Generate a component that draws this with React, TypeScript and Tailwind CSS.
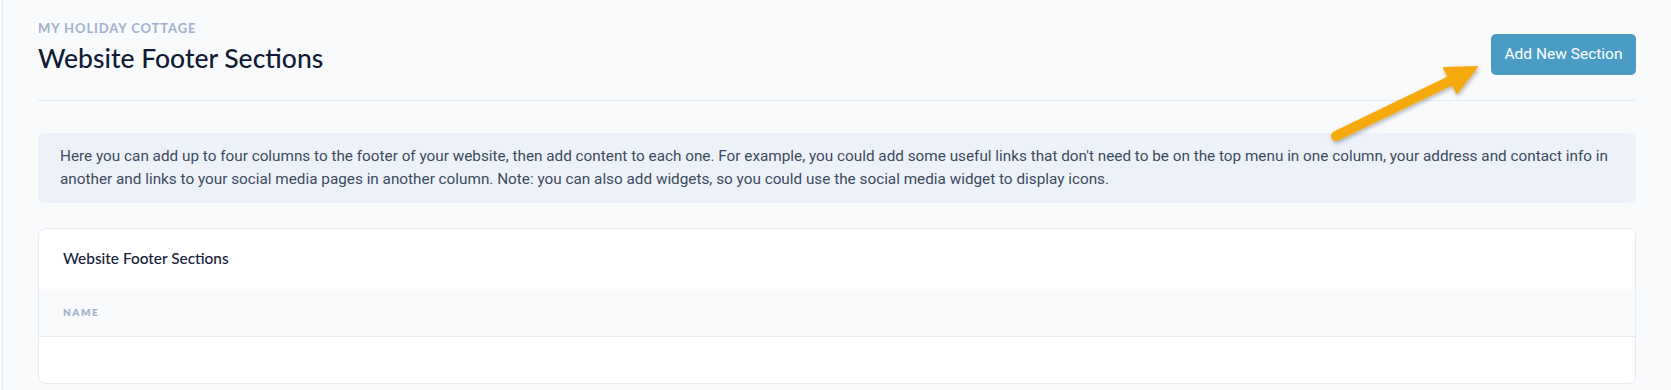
export default function App() {
  const line1 =
    "Here you can add up to four columns to the footer of your website, then add content to each one. For example, you could add some useful links that don't need to be on the top menu in one column, your address and contact info in";
  const line2 =
    "another and links to your social media pages in another column. Note: you can also add widgets, so you could use the social media widget to display icons.";

  return (
    <div className="relative min-h-screen bg-[#f8fafc]">
      <div className="ml-[2px] min-h-screen border-l border-[#e3e7ee] pl-[35px] pr-[35px] pb-[6px]">
        {/* page header */}
        <div className="flex items-start justify-between border-b border-[#e5e9f0] pt-[20px] pb-[25px]">
          <div className="flex flex-col">
            <span className="font-['Lato',sans-serif] text-[13px] leading-4 font-bold tracking-[0.07em] text-[#a1b1cc]">
              MY HOLIDAY COTTAGE
            </span>
            <h1 className="mt-[6px] font-['Lato',sans-serif] text-[26.5px] leading-8 font-medium text-[#111b35]">
              Website Footer Sections
            </h1>
          </div>
          <button className="mt-[14px] h-[41px] w-[145px] rounded-[5px] bg-[#4a9cc5] font-['Roboto',sans-serif] text-[15.5px] text-white">
            Add New Section
          </button>
        </div>

        {/* info box */}
        <div className="mt-[32px] rounded-[6px] bg-[#edf2f8] pl-[22px] pr-[10px] py-[12px] font-['Roboto',sans-serif] text-[15.3px] leading-[23px] text-[#3e4a5f]">
          {line1}
          <br />
          {line2}
        </div>

        {/* sections table */}
        <div className="mt-[25px] overflow-hidden rounded-[8px] border border-[#e6eaf1] bg-white">
          <div className="flex h-[60px] items-center px-6">
            <h2 className="font-['Lato',sans-serif] text-[15.4px] font-medium text-[#16203a]">
              Website Footer Sections
            </h2>
          </div>
          <table className="w-full">
            <thead>
              <tr className="border-b border-[#e6eaf1] bg-[#f8fafc]">
                <th className="h-[47px] px-6 text-left font-['Lato',sans-serif] text-[10px] font-extrabold tracking-[0.15em] text-[#a3b2cb]">
                  NAME
                </th>
              </tr>
            </thead>
            <tbody>
              <tr>
                <td className="h-[47px]"></td>
              </tr>
            </tbody>
          </table>
        </div>
      </div>

      {/* annotation arrow */}
      <svg
        className="pointer-events-none absolute left-0 top-0"
        width="1671"
        height="390"
        viewBox="0 0 1671 390"
      >
        <defs>
          <filter id="sh" x="-20%" y="-20%" width="140%" height="140%">
            <feDropShadow dx="1" dy="2" stdDeviation="2" floodColor="#000" floodOpacity="0.3" />
          </filter>
        </defs>
        <g filter="url(#sh)" fill="#f6a90b" stroke="#f6a90b">
          <line x1="1336" y1="136" x2="1452" y2="80" strokeWidth="10" strokeLinecap="round" />
          <polygon points="1477,67 1444,68 1457,93" strokeWidth="2" strokeLinejoin="round" />
        </g>
      </svg>
    </div>
  );
}
